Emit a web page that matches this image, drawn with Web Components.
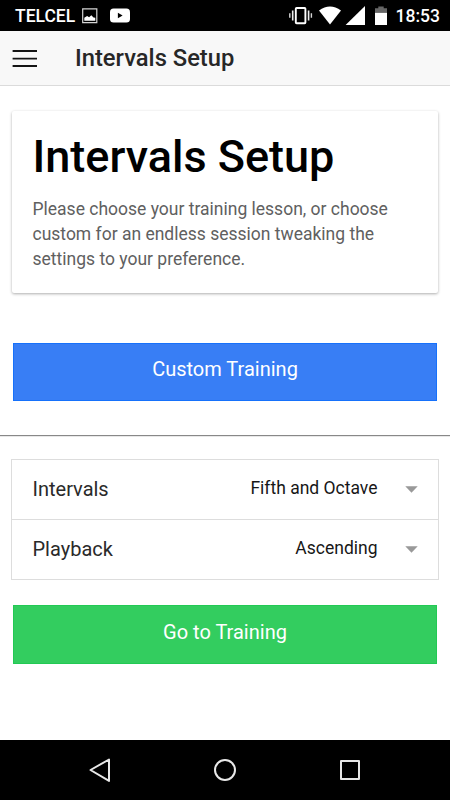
<!DOCTYPE html>
<html lang="en">
<head>
<meta charset="utf-8">
<title>Intervals Setup</title>
<style>
html, body { margin: 0; height: 100%; }
body { font-family: Roboto, "Liberation Sans", sans-serif; background: #fff; overflow: hidden; }
</style>
</head>
<body>
<training-app></training-app>
<script>
function define(name, html) {
  const template = document.createElement('template');
  template.innerHTML = html;
  customElements.define(name, class extends HTMLElement {
    constructor() {
      super();
      this.attachShadow({ mode: 'open' }).append(template.content.cloneNode(true));
    }
  });
}

define('status-bar', `
<style>
:host { display: flex; height: 31px; box-sizing: border-box; padding: 2px 10px 0 15px; background: #000; color: #fff; align-items: center; font-size: 17.5px; font-weight: 500; line-height: 29px; }
.carrier { width: 67px; }
svg { display: block; flex: none; margin-top: -2px; }
.space { flex: 1; }
.time { width: 44.4px; }
.right { margin-right: 6.6px; }
</style>
<span class="carrier">TELCEL</span>
<svg width="50" height="31" viewBox="82 0 50 31">
  <path d="M82.7 8.8h14.1v13.9H82.7z" fill="none" stroke="#d4d4d4" stroke-width="1.2"/>
  <path d="M84.3 20.8v-3.1l2.8-1.8 2 1.4 2.2-2 2.2 2.2 1.8.3v3z" fill="#fff"/>
  <rect x="110" y="8.6" width="20" height="14" rx="3.6" fill="#fff"/>
  <path d="M117.9 12.7v5.6l4.7-2.8z" fill="#000"/>
</svg>
<span class="space"></span>
<svg class="right" width="100" height="31" viewBox="289 0 100 31">
  <rect x="295.8" y="8" width="9.6" height="15.2" rx=".8" fill="none" stroke="#fff" stroke-width="1.9"/>
  <path d="M292.7 10.5v10M308.6 10.5v10" stroke="#eee" stroke-width="1.6"/>
  <path d="M289.8 13.3v4.4M311.4 13.3v4.4" stroke="#d5d5d5" stroke-width="1.4"/>
  <path d="M319 10.5Q330 2.4 341 10.5L330 24.6z" fill="#fff"/>
  <path d="M345.6 25L365 6v19z" fill="#fff"/>
  <path d="M375 13V8.3h3.3V6.6h5.4v1.7h3.3V13z" fill="#666"/>
  <path d="M375 12.9h12V25h-12z" fill="#fff"/>
</svg>
<span class="time">18:53</span>
`);

define('nav-header', `
<style>
:host { display: flex; align-items: center; gap: 38px; height: 55px; box-sizing: border-box; padding-left: 12px; background: #f8f8f8; border-bottom: 1px solid #dbdbdb; color: #272727; font-size: 23.75px; font-weight: 500; line-height: 54px; }
svg { display: block; }
</style>
<svg width="25" height="18" viewBox="0 0 25 18"><path d="M.6 2h25M.6 9.7h25M.6 17h25" stroke="#141414" stroke-width="1.8"/></svg>
<span><slot></slot></span>
`);

define('info-card', `
<style>
:host { display: block; box-sizing: border-box; height: 182px; margin: 25px 12.5px 0 12px; padding: 16px 20px 0 20.5px; background: #fff; border-radius: 2px; box-shadow: 0 1px 3px rgba(0, 0, 0, .32); }
h1 { margin: 0 0 10px; font-size: 45px; font-weight: 500; line-height: 60px; color: #000; white-space: nowrap; }
p { margin: 0; font-size: 17.5px; line-height: 25px; color: #606060; }
</style>
<h1><slot name="title"></slot></h1>
<p><slot></slot></p>
`);

define('action-button', `
<style>
:host { display: block; box-sizing: border-box; height: var(--height); margin: 0 13px; background: var(--fill); border: 1px solid var(--edge); text-align: center; font-size: 20px; line-height: var(--line); color: #fff; }
</style>
<slot></slot>
`);

define('settings-list', `
<style>
:host { display: block; margin: 0 11px 25px; border: 1px solid #ddd; }
</style>
<slot></slot>
`);

define('select-row', `
<style>
:host { display: flex; height: 59px; align-items: flex-start; padding: 0 20.5px; font-size: 20px; line-height: 59px; color: #2a2a2a; }
:host(:not(:last-child)) { border-bottom: 1px solid #ddd; }
.label { flex: 1; }
.value { font-size: 17.5px; line-height: 57px; color: #171717; }
svg { display: block; margin: 26px 0 0 27px; }
</style>
<span class="label"><slot></slot></span>
<span class="value"><slot name="value"></slot></span>
<svg width="13" height="7" viewBox="0 0 13 7"><path d="M.3.3h12.4L6.5 6.7z" fill="#999"/></svg>
`);

define('system-nav', `
<style>
:host { display: flex; height: 60px; background: #000; align-items: center; justify-content: space-between; padding: 0 87.5px; }
svg { display: block; fill: none; stroke: #e8e8e8; stroke-width: 2; stroke-linejoin: round; }
</style>
<svg width="25" height="25" viewBox="0.5 0.5 25 25"><path d="M3 12.5L21.5 2v21.4z"/></svg>
<svg width="25" height="25" viewBox="0.5 0.5 25 25"><circle cx="12.5" cy="12.5" r="10"/></svg>
<svg width="25" height="25" viewBox="0.5 0.5 25 25"><path d="M3.5 3.5h18v18h-18z"/></svg>
`);

define('training-app', `
<style>
:host { display: flex; flex-direction: column; width: 450px; height: 800px; background: #fff; }
main { flex: 1; }
.blue { --fill: #387ef5; --edge: #1671fb; --height: 58px; --line: 51px; margin-top: 50px; }
.green { --fill: #33cd5f; --edge: #22c954; --height: 59px; --line: 52px; }
hr { margin: 34px 0 22px; border: 0; height: 1px; background: #888; border-bottom: 1px solid #e8e8e8; }
</style>
<status-bar></status-bar>
<nav-header>Intervals Setup</nav-header>
<main>
  <info-card><span slot="title">Intervals Setup</span>Please choose your training lesson, or choose custom for an endless session tweaking the settings to your preference.</info-card>
  <action-button class="blue">Custom Training</action-button>
  <hr>
  <settings-list>
    <select-row>Intervals<span slot="value">Fifth and Octave</span></select-row>
    <select-row>Playback<span slot="value">Ascending</span></select-row>
  </settings-list>
  <action-button class="green">Go to Training</action-button>
</main>
<system-nav></system-nav>
`);
</script>
</body>
</html>
